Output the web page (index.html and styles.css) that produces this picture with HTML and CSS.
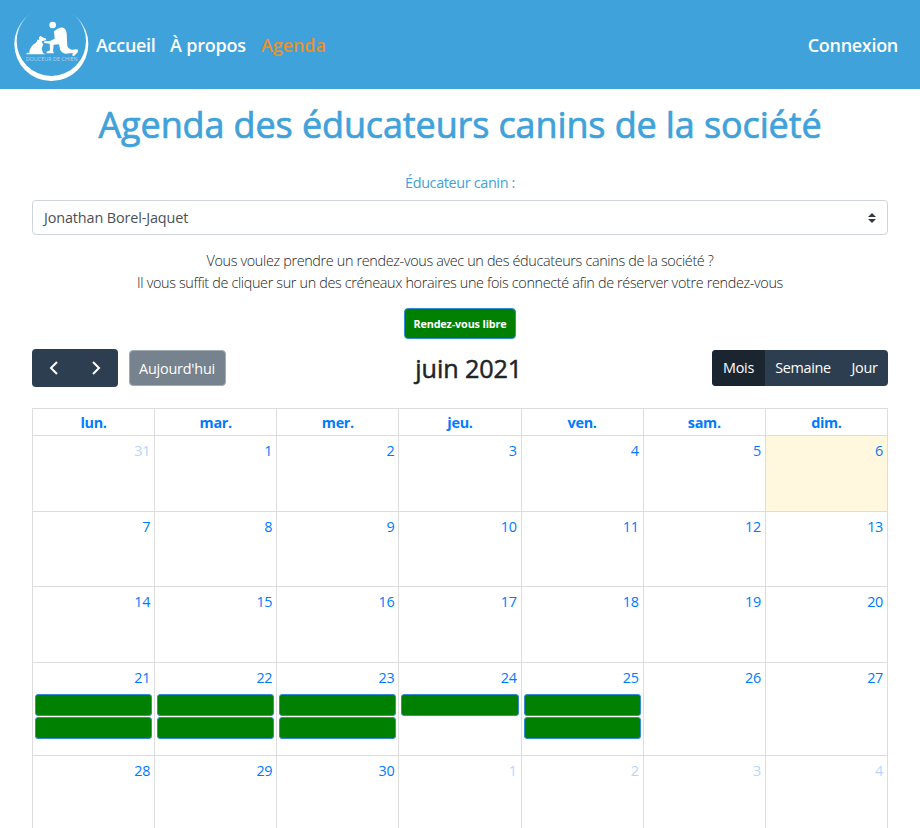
FILE: index.html
```html
<!DOCTYPE html>
<html lang="fr">
<head>
<meta charset="utf-8">
<title>Agenda</title>
<link rel="stylesheet" href="styles.css">
</head>
<body>
<nav class="navbar">
  <svg class="logo" viewBox="0 0 246 267" aria-hidden="true">
    <defs><linearGradient id="ring" x1="0" y1="35" x2="0" y2="243" gradientUnits="userSpaceOnUse"><stop offset="0" stop-color="#fff" stop-opacity="0"/><stop offset=".15" stop-color="#fff" stop-opacity=".6"/><stop offset=".4" stop-color="#fff"/></linearGradient></defs>
    <path fill="url(#ring)" fill-rule="evenodd" d="M1 132a111 111 0 0 0 222 0a111 111 0 0 0-222 0zM8 124a104 104 0 0 0 208 0a104 104 0 0 0-208 0z"/>
    <g fill="#fff">
      <circle cx="116" cy="75" r="10"/>
      <path d="M120 94Q136 80 148 83Q157 87 158 101L160 138Q164 148 174 149L190 148Q195 152 190 158L180 168L174 166L177 159L154 161Q141 158 138 148L135 133L119 134L117 153L120 160H97L98 155L108 151L107 131L91 129L90 124L108 123L122 116Z"/>
      <path d="M75 112L80 107L84 111L97 116L95 121L85 123L83 127L88 132L83 146L87 159L94 163H37L38 159L46 158Q47 139 65 129Q71 123 70 119L75 119Z"/>
    </g>
    <text class="logo-name" x="35" y="183" textLength="156" lengthAdjust="spacingAndGlyphs">DOUCEUR DE CHIEN</text>
  </svg>
  <a class="nav-link home">Accueil</a>
  <a class="nav-link about">À propos</a>
  <a class="nav-link active">Agenda</a>
  <a class="nav-link login">Connexion</a>
</nav>
<main class="container">
  <h1 class="title"><span>Agenda des éducateurs canins de la société</span></h1>
  <div class="label"><span>Éducateur canin :</span></div>
  <div class="select"><span>Jonathan Borel-Jaquet</span>
    <svg class="caret" viewBox="0 0 8 10"><path fill="#343a40" d="M4 0L8 4H0zM0 6H8L4 10z"/></svg>
  </div>
  <p class="intro"><span class="line1">Vous voulez prendre un rendez-vous avec un des éducateurs canins de la société ?</span><br><span class="line2">Il vous suffit de cliquer sur un des créneaux horaires une fois connecté afin de réserver votre rendez-vous</span></p>
  <div class="legend"><span class="badge">Rendez-vous libre</span></div>
  <div class="toolbar">
    <div class="side">
      <div class="arrows">
        <svg viewBox="0 0 10 14"><path d="M8 1L2 7L8 13"/></svg>
        <svg viewBox="0 0 10 14"><path d="M2 1L8 7L2 13"/></svg>
      </div>
      <div class="today">Aujourd'hui</div>
    </div>
    <h2 class="month">juin 2021</h2>
    <div class="side views">
      <span class="view selected">Mois</span><span class="view week">Semaine</span><span class="view day">Jour</span>
    </div>
  </div>
  <table class="calendar">
    <thead><tr><th>lun.</th><th>mar.</th><th>mer.</th><th>jeu.</th><th>ven.</th><th>sam.</th><th>dim.</th></tr></thead>
    <tbody>
      <tr><td class="other">31</td><td>1</td><td>2</td><td>3</td><td>4</td><td>5</td><td class="current">6</td></tr>
      <tr><td>7</td><td>8</td><td>9</td><td>10</td><td>11</td><td>12</td><td>13</td></tr>
      <tr><td>14</td><td>15</td><td>16</td><td>17</td><td>18</td><td>19</td><td>20</td></tr>
      <tr class="busy"><td>21<i class="event"></i><i class="event"></i></td><td>22<i class="event"></i><i class="event"></i></td><td>23<i class="event"></i><i class="event"></i></td><td>24<i class="event"></i></td><td>25<i class="event"></i><i class="event"></i></td><td>26</td><td>27</td></tr>
      <tr><td>28</td><td>29</td><td>30</td><td class="other">1</td><td class="other">2</td><td class="other">3</td><td class="other">4</td></tr>
    </tbody>
  </table>
</main>
</body>
</html>
```
FILE: styles.css
```css
* { box-sizing: border-box; }
html { overflow: hidden; }
body { margin: 0; height: 828px; overflow: hidden; background: #fff; color: #212529; font: 14.4px/22px "Open Sans", "Noto Sans", sans-serif; }
.navbar { display: flex; align-items: center; height: 89px; padding: 0 22px 0 14px; background: #3fa2da; }
.logo { width: 82px; height: 89px; flex: none; }
.logo-name { font: 15px "Open Sans", sans-serif; fill: #fff; fill-opacity: .55; }
.nav-link { color: #fff; font-size: 18px; font-weight: 600; line-height: 27px; white-space: nowrap; margin-top: 2px; }
.home { width: 74px; letter-spacing: -.3px; }
.about { width: 91px; letter-spacing: -.2px; }
.active { color: #e8912d; letter-spacing: -.1px; }
.login { margin-left: auto; letter-spacing: -.3px; }
.container { padding: 0 32px; }
.title { margin: 14px 0 0; height: 43px; color: #3fa2da; font-size: 36px; line-height: 43px; font-weight: 500; text-align: center; white-space: nowrap; letter-spacing: -.12px; -webkit-text-stroke: .7px #3fa2da; }
.label { margin-top: 26px; color: #3fa2da; text-align: center; letter-spacing: -.35px; }
.select { display: flex; align-items: center; justify-content: space-between; height: 35px; margin-top: 6px; padding: 0 11px; border: 1px solid #ced4da; border-radius: 4px; color: #495057; letter-spacing: -.12px; }
.caret { width: 8px; height: 10px; }
.intro { margin: 15px 0 0; text-align: center; font-weight: 300; white-space: nowrap; letter-spacing: -.34px; }
.legend { display: flex; justify-content: center; margin-top: 14px; }
.badge { width: 112px; height: 31px; border: 1px solid #3788d8; border-radius: 4px; background: green; color: #fff; font-size: 10.8px; font-weight: 700; line-height: 30px; text-align: center; letter-spacing: -.13px; white-space: nowrap; }
.toolbar { display: flex; justify-content: space-between; align-items: center; height: 38px; margin-top: 9.5px; color: #fff; }
.side { display: flex; align-items: center; }
.arrows { display: flex; align-items: center; justify-content: space-between; width: 86px; height: 38px; padding: 0 17px; border-radius: 4px; background: #2c3e50; }
.arrows svg { width: 10px; height: 14px; fill: none; stroke: #fff; stroke-width: 2; }
.today { width: 97px; height: 36px; margin-left: 10.5px; border: 1px solid #a3abb3; border-radius: 4px; background: #76828d; line-height: 35px; text-align: center; letter-spacing: -.2px; }
.month { margin: 0; color: #212529; font-size: 25.2px; font-weight: 500; line-height: 30px; letter-spacing: -.1px; -webkit-text-stroke: .5px #212529; }
.views { width: 176px; height: 36px; border-radius: 4px; overflow: hidden; background: #2c3e50; line-height: 36px; text-align: center; }
.view { width: 53px; letter-spacing: -.3px; }
.selected { background: #1a252f; }
.week { width: 76px; }
.day { width: 47px; }
.calendar { width: 856px; margin-top: 21.5px; border-collapse: collapse; table-layout: fixed; color: #007bff; }
.calendar th, .calendar td { border: 1px solid #ddd; }
.calendar th { height: 27px; padding: 2px 0 0; font-weight: 700; line-height: 22px; letter-spacing: -.3px; }
.calendar td { height: 75.5px; padding: 4px 4px 0 2px; text-align: right; vertical-align: top; letter-spacing: -.3px; font-weight: 400; }
.calendar .busy td { height: 93.5px; }
.calendar .other { color: #b3d7ff; }
.calendar .current { background: #fff8df; }
.event { display: block; height: 22px; margin: 1px -2px 0 0; border: 1px solid #3788d8; border-radius: 3px; background: green; }
.event:first-of-type { margin-top: 5px; }
```
